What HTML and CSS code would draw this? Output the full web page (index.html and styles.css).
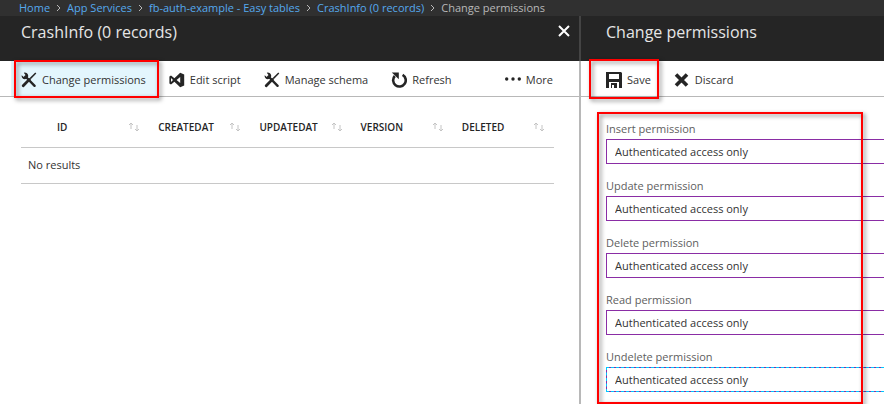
FILE: index.html
```html
<!DOCTYPE html>
<html lang="en">
<head>
<meta charset="utf-8">
<title>Change permissions</title>
<link rel="stylesheet" href="styles.css">
</head>
<body>
<svg class="sprite" aria-hidden="true">
  <symbol id="tools" viewBox="0 0 16 16">
    <path d="M14.8 1 9.2 6.6" stroke="#252525" stroke-width="1.5" fill="none"/>
    <path d="M8.4 7.4 2.2 13.8" stroke="#252525" stroke-width="2.8" stroke-linecap="round" fill="none"/>
    <path d="M4.5 4.5 13.6 13.8" stroke="#252525" stroke-width="2.4" stroke-linecap="round" fill="none"/>
    <path d="M2.8.8A3.3 3.3 0 1 1 .7 3.2L2.8 5 4.7 3.3Z" fill="#252525"/>
  </symbol>
</svg>
<nav class="crumbs" aria-label="Breadcrumb">
  <a href="#">Home</a>
  <svg class="sep" viewBox="0 0 5 8"><path d="M1 1l3 3-3 3"/></svg>
  <a href="#">App Services</a>
  <svg class="sep" viewBox="0 0 5 8"><path d="M1 1l3 3-3 3"/></svg>
  <a href="#">fb-auth-example - Easy tables</a>
  <svg class="sep" viewBox="0 0 5 8"><path d="M1 1l3 3-3 3"/></svg>
  <a href="#">CrashInfo (0 records)</a>
  <svg class="sep" viewBox="0 0 5 8"><path d="M1 1l3 3-3 3"/></svg>
  <span>Change permissions</span>
</nav>
<main class="blades">
  <section class="blade blade-table">
    <header class="blade-head">
      <h1>CrashInfo (0 records)</h1>
      <button class="close" aria-label="Close"><svg viewBox="0 0 12 12"><path d="M1 1l10 10M11 1L1 11"/></svg></button>
    </header>
    <div class="toolbar">
      <button class="command active marked"><svg class="icon"><use href="#tools"/></svg>Change permissions</button>
      <button class="command"><svg class="icon" viewBox="0 0 16 16"><path fill="#252525" fill-rule="evenodd" d="M11.2.8 15.2 2.4V13.6L11.2 15.2 5.4 9.8 2 12.4.4 11.6V4.4L2 3.6 5.4 6.2ZM11.2 5 7.6 8 11.2 11ZM2 6V10L4 8Z"/></svg>Edit script</button>
      <button class="command"><svg class="icon"><use href="#tools"/></svg>Manage schema</button>
      <button class="command"><svg class="icon" viewBox="0 0 16 16"><path fill="none" stroke="#252525" stroke-width="2.6" d="M11.6 2.8A6.3 6.3 0 1 1 3.8 4"/><path fill="#252525" d="M.8.4H7.8V7.2Z"/></svg>Refresh</button>
      <button class="command more"><svg class="icon" viewBox="0 0 16 16"><g fill="#252525"><circle cx="1.7" cy="7" r="1.7"/><circle cx="8" cy="7" r="1.7"/><circle cx="14.3" cy="7" r="1.7"/></g></svg>More</button>
    </div>
    <table class="records">
      <thead>
        <tr>
          <th class="pick"></th>
          <th><div class="col">ID<svg class="sort" viewBox="0 0 12 10"><path d="M3 7V1M1 3l2-2 2 2M9 3v6M7 7l2 2 2-2"/></svg></div></th>
          <th><div class="col">CREATEDAT<svg class="sort" viewBox="0 0 12 10"><path d="M3 7V1M1 3l2-2 2 2M9 3v6M7 7l2 2 2-2"/></svg></div></th>
          <th><div class="col">UPDATEDAT<svg class="sort" viewBox="0 0 12 10"><path d="M3 7V1M1 3l2-2 2 2M9 3v6M7 7l2 2 2-2"/></svg></div></th>
          <th><div class="col">VERSION<svg class="sort" viewBox="0 0 12 10"><path d="M3 7V1M1 3l2-2 2 2M9 3v6M7 7l2 2 2-2"/></svg></div></th>
          <th><div class="col">DELETED<svg class="sort" viewBox="0 0 12 10"><path d="M3 7V1M1 3l2-2 2 2M9 3v6M7 7l2 2 2-2"/></svg></div></th>
        </tr>
      </thead>
      <tbody><tr><td colspan="6">No results</td></tr></tbody>
    </table>
  </section>
  <section class="blade blade-form">
    <header class="blade-head"><h2>Change permissions</h2></header>
    <div class="toolbar">
      <button class="command save marked"><svg class="icon" viewBox="0 0 16 16"><path fill="#252525" fill-rule="evenodd" d="M0 0H15L16 1V16H0ZM3 2V7H13V2ZM3 10V16H5V11H11V16H13V10ZM6 13V16H8V13Z"/></svg>Save</button>
      <button class="command"><svg class="icon" viewBox="0 0 16 16"><path fill="none" stroke="#252525" stroke-width="3.6" d="M2 2.4 13 13.4M13 2.4 2 13.4"/></svg>Discard</button>
    </div>
    <form class="permissions marked">
      <div class="field"><label for="insert">Insert permission</label><select id="insert"><option>Authenticated access only</option></select></div>
      <div class="field"><label for="update">Update permission</label><select id="update"><option>Authenticated access only</option></select></div>
      <div class="field"><label for="delete">Delete permission</label><select id="delete"><option>Authenticated access only</option></select></div>
      <div class="field"><label for="read">Read permission</label><select id="read"><option>Authenticated access only</option></select></div>
      <div class="field"><label for="undelete">Undelete permission</label><select id="undelete" class="current"><option>Authenticated access only</option></select></div>
    </form>
  </section>
</main>
</body>
</html>
```
FILE: styles.css
```css
* { box-sizing: border-box; }
body {
  margin: 0;
  min-height: 100vh;
  display: flex;
  flex-direction: column;
  overflow: hidden;
  background: #fff;
  color: #333;
  font: 11px/16px "Open Sans", "Noto Sans", sans-serif;
}
button, select { font: inherit; color: inherit; }
.sprite { display: none; }

.crumbs {
  display: flex;
  align-items: center;
  gap: 6px;
  height: 16px;
  padding-left: 19px;
  background: #303030;
  color: #b8b8b8;
  white-space: nowrap;
}
.crumbs a { color: #55a9ee; text-decoration: none; }
.sep { width: 5px; height: 8px; fill: none; stroke: #b8b8b8; }

.blades { flex: 1; display: flex; }
.blade { min-width: 0; }
.blade-table { flex: 1; }
.blade-form { flex: 0 0 34.5%; border-left: 2px solid #b8b8b8; }
.blade-head {
  display: flex;
  justify-content: space-between;
  align-items: flex-start;
  height: 45px;
  padding: 4px 4px 0 21px;
  background: #252525;
  color: #e6e6e6;
}
.blade-form .blade-head {
  margin-left: -2px;
  padding-left: 25px;
  border-left: 2px solid #444;
}
.blade-head h1, .blade-head h2 {
  margin: 0;
  font-size: 16px;
  font-weight: 400;
  line-height: 24px;
}
.close { padding: 5px; border: 0; background: none; }
.close svg { display: block; width: 12px; height: 12px; fill: none; stroke: #fff; stroke-width: 2; }

.toolbar {
  display: flex;
  height: 36px;
  padding-left: 11px;
  border-bottom: 1px solid #b8b8b8;
}
.command {
  display: flex;
  align-items: center;
  gap: 5px;
  padding: 2px 13px 0 10px;
  border: 0;
  background: none;
  white-space: nowrap;
}
.icon { flex: none; width: 16px; height: 16px; }
.active { background: #e3f6fd; }
.more { margin-left: auto; margin-right: 13px; }
.blade-form .toolbar { padding-left: 15px; }

/* Red callout frames */
.marked { position: relative; }
.marked::after {
  content: "";
  position: absolute;
  inset: -1px 0 -2px 3px;
  border: 2px solid #f00;
  filter: drop-shadow(2px 2px 2px rgba(0, 0, 0, 0.5));
  pointer-events: none;
}
.save::after { inset: -2px 5px -3px -7px; }

.records {
  width: calc(100% - 46px);
  margin: 10px 25px 0 21px;
  border-collapse: collapse;
  table-layout: fixed;
}
.records th {
  height: 40px;
  padding: 0 9px;
  border-bottom: 1px solid #c8c8c8;
  color: #252525;
  font-size: 10px;
  font-weight: 600;
  text-align: left;
}
.records .pick { width: 27px; padding: 0; }
.col { display: flex; justify-content: space-between; align-items: center; }
.sort { flex: none; width: 12px; height: 10px; fill: none; stroke: #c4c4c4; }
.records td { height: 36px; padding: 0 7px; border-bottom: 1px solid #c8c8c8; }

.permissions {
  display: grid;
  gap: 14px;
  margin: 15px 0 0 16px;
  padding: 9px 0 12px 9px;
}
.permissions::after { inset: 0 21px 0 0; }
.field { display: grid; gap: 2px; margin-right: -10px; }
.field label { color: #606060; }
.field select {
  appearance: none;
  width: 100%;
  height: 25px;
  padding: 0 8px;
  border: 1px solid #8a2da5;
  border-radius: 0;
  background: #fff;
}
.field .current {
  border: 1px dashed #00c8ff;
  background: linear-gradient(#fff, #fff) padding-box, linear-gradient(#8a2da5, #8a2da5) border-box;
}
```
